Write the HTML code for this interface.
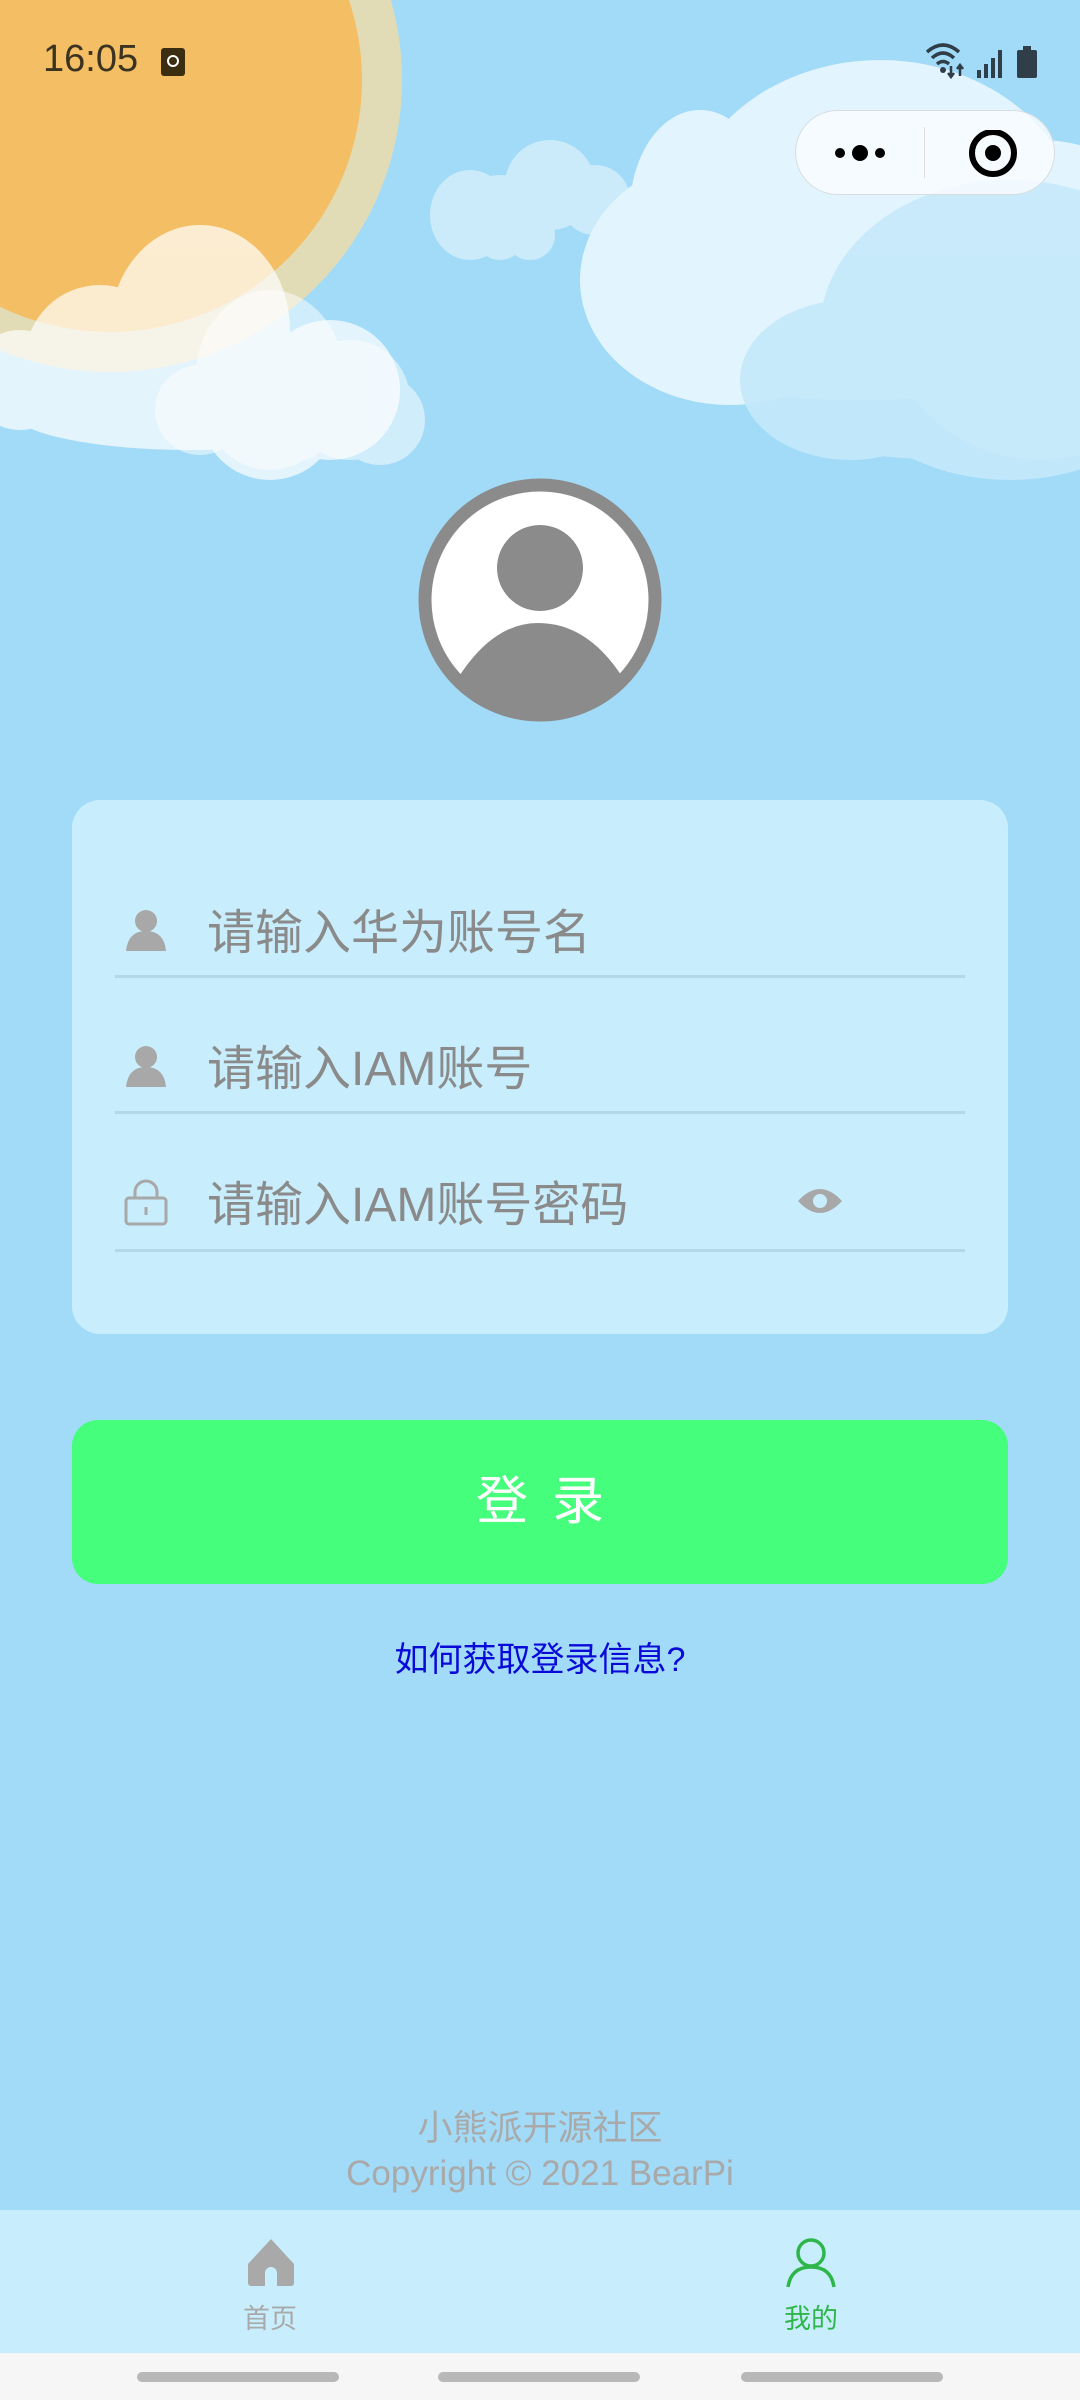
<!DOCTYPE html>
<html><head><meta charset="utf-8"><style>
*{margin:0;padding:0;box-sizing:border-box}
body{width:1080px;height:2400px;background:#a2dbf7;position:relative;overflow:hidden;font-family:"Liberation Sans","Noto Sans CJK SC",sans-serif}
.abs{position:absolute}
.card{left:72px;top:800px;width:936px;height:534px;background:#c8eefd;border-radius:28px}
.line{left:115px;width:850px;height:3px;background:#b3d9e8}
.ph{left:207px;font-size:48px;color:#8a8a8a;line-height:60px}
.btn{left:72px;top:1420px;width:936px;height:164px;background:#45fe7b;border-radius:26px;color:#fff;font-size:52px;text-align:center;line-height:164px;letter-spacing:24px;text-indent:24px}
</style></head><body>
<svg class="abs" style="left:0;top:0" width="1080" height="560">
<defs><radialGradient id="g" cx="0.55" cy="0" r="0.5"><stop offset="0" stop-color="#d0eadb"/><stop offset="1" stop-color="#a2dbf7" stop-opacity="0"/></radialGradient></defs>
<ellipse cx="420" cy="0" rx="300" ry="260" fill="url(#g)"/>
<circle cx="110" cy="80" r="292" fill="#e2dcb6"/>
<circle cx="110" cy="80" r="252" fill="#f4bf64"/>
<g fill="#fff" opacity=".7">
<ellipse cx="200" cy="330" rx="90" ry="105"/><circle cx="100" cy="360" r="75"/><circle cx="270" cy="410" r="70"/><circle cx="330" cy="390" r="70"/><circle cx="20" cy="380" r="50"/><circle cx="80" cy="400" r="40"/><ellipse cx="190" cy="410" rx="180" ry="40"/>
</g>
<g fill="#fff" opacity=".5">
<ellipse cx="270" cy="380" rx="75" ry="90"/><circle cx="350" cy="400" r="60"/><circle cx="200" cy="410" r="45"/><circle cx="380" cy="420" r="45"/><circle cx="300" cy="430" r="30"/>
</g>
<g fill="#fff" opacity=".45">
<ellipse cx="550" cy="185" rx="45" ry="45"/><circle cx="595" cy="200" r="35"/><ellipse cx="470" cy="215" rx="40" ry="45"/><ellipse cx="500" cy="205" rx="35" ry="30"/><circle cx="500" cy="235" r="25"/><circle cx="530" cy="235" r="25"/>
</g>
<g fill="#e2f4fd">
<ellipse cx="730" cy="280" rx="150" ry="125"/><ellipse cx="700" cy="210" rx="70" ry="100"/><ellipse cx="880" cy="230" rx="200" ry="170"/><circle cx="1040" cy="300" r="160"/><ellipse cx="860" cy="340" rx="240" ry="60"/>
</g>
<g fill="#c5e9fb" opacity=".9">
<ellipse cx="1010" cy="330" rx="190" ry="150"/><ellipse cx="850" cy="380" rx="110" ry="80"/><ellipse cx="960" cy="410" rx="200" ry="50"/><ellipse cx="1040" cy="420" rx="80" ry="50"/>
</g>
</svg>
<div class="abs" style="left:43px;top:38px;font-size:38px;color:#3b3322">16:05</div>
<div class="abs" style="left:161px;top:48px;width:24px;height:28px;background:#3b2d10;border-radius:3px"><div style="position:absolute;left:6px;top:7px;width:12px;height:12px;border:2px solid #fff;border-radius:50%"></div></div>
<svg class="abs" style="left:925px;top:40px" width="120" height="42">
<path d="M2 12 Q18 -2 34 12 M7 18 Q18 8 29 18 M12 24 Q18 19 24 24" stroke="#2f3e48" stroke-width="3.5" fill="none"/><circle cx="18" cy="30" r="3" fill="#2f3e48"/>
<path d="M26 26v10 M23 33l3 4 3-4 M35 36v-10 M32 29l3-4 3 4" stroke="#2f3e48" stroke-width="2.5" fill="none"/>
<rect x="52" y="30" width="4" height="8" fill="#2f3e48"/><rect x="59" y="24" width="4" height="14" fill="#2f3e48"/><rect x="66" y="18" width="4" height="20" fill="#2f3e48"/><rect x="73" y="10" width="4" height="28" fill="#2f3e48"/>
<rect x="92" y="10" width="20" height="28" rx="2" fill="#2f3e48"/><rect x="98" y="6" width="8" height="5" fill="#2f3e48"/>
</svg>
<div class="abs" style="left:795px;top:110px;width:260px;height:85px;border-radius:43px;background:rgba(248,252,255,.85);border:1.5px solid #d8dde0"></div>
<div class="abs" style="left:924px;top:127px;width:1px;height:51px;background:#dedede"></div>
<svg class="abs" style="left:830px;top:130px" width="200" height="50">
<circle cx="10" cy="23" r="5" fill="#000"/><circle cx="30" cy="23" r="8" fill="#000"/><circle cx="50" cy="23" r="5" fill="#000"/>
<circle cx="163" cy="23" r="21" stroke="#000" stroke-width="6" fill="none"/><circle cx="163" cy="23" r="8" fill="#000"/>
</svg>
<svg class="abs" style="left:418px;top:478px" width="244" height="244">
<circle cx="122" cy="122" r="115" fill="#fff" stroke="#8b8b8b" stroke-width="13"/>
<circle cx="122" cy="90" r="43" fill="#8b8b8b"/>
<clipPath id="c"><circle cx="122" cy="122" r="115"/></clipPath>
<path d="M40 200 Q75 145 120 145 Q170 145 205 200 L240 244 L0 244Z" fill="#8b8b8b" clip-path="url(#c)"/>
</svg>
<div class="abs card"></div>
<svg class="abs" style="left:124px;top:907px" width="44" height="46"><circle cx="22" cy="14" r="11" fill="#a8a8a8"/><path d="M2 44 Q4 24 22 24 Q40 24 42 44Z" fill="#a8a8a8"/></svg>
<svg class="abs" style="left:124px;top:1043px" width="44" height="46"><circle cx="22" cy="14" r="11" fill="#a8a8a8"/><path d="M2 44 Q4 24 22 24 Q40 24 42 44Z" fill="#a8a8a8"/></svg>
<svg class="abs" style="left:124px;top:1178px" width="44" height="48"><path d="M11 20V14a11 11 0 0 1 22 0v6" stroke="#a8a8a8" stroke-width="3" fill="none"/><rect x="2" y="20" width="40" height="26" rx="3" stroke="#a8a8a8" stroke-width="3" fill="none"/><rect x="20.5" y="29" width="3" height="8" fill="#a8a8a8"/></svg>
<div class="abs ph" style="top:904px">请输入华为账号名</div>
<div class="abs ph" style="top:1040px">请输入IAM账号</div>
<div class="abs ph" style="top:1176px">请输入IAM账号密码</div>
<svg class="abs" style="left:796px;top:1185px" width="48" height="32"><path d="M2 16 Q24 -8 46 16 Q24 40 2 16Z" fill="#a8a8a8"/><circle cx="24" cy="16" r="7" fill="#c8eefd"/></svg>
<div class="abs line" style="top:975px"></div>
<div class="abs line" style="top:1111px"></div>
<div class="abs line" style="top:1249px"></div>
<div class="abs btn">登录</div>
<div class="abs" style="left:0;width:1080px;top:1632px;text-align:center;font-size:34px;color:#0a0ad8">如何获取登录信息?</div>
<div class="abs" style="left:0;width:1080px;top:2106px;text-align:center;font-size:35px;color:#a9a9a9;line-height:45px">小熊派开源社区<br>Copyright © 2021 BearPi</div>
<div class="abs" style="left:0;top:2210px;width:1080px;height:143px;background:#c8eefd"></div>
<svg class="abs" style="left:244px;top:2237px" width="54" height="50"><path d="M27 2 L50 27 V46 a3 3 0 0 1 -3 3 H33 V36 a6 6 0 0 0 -12 0 V49 H7 a3 3 0 0 1 -3 -3 V27Z" fill="#a9a9a9"/></svg>
<div class="abs" style="left:230px;top:2297px;width:80px;text-align:center;font-size:27px;color:#a9a9a9">首页</div>
<svg class="abs" style="left:783px;top:2237px" width="56" height="52"><circle cx="28" cy="16" r="13" stroke="#2fb64a" stroke-width="3.5" fill="none"/><path d="M5 50 Q8 30 28 30 Q48 30 51 50" stroke="#2fb64a" stroke-width="3.5" fill="none"/></svg>
<div class="abs" style="left:771px;top:2297px;width:80px;text-align:center;font-size:27px;color:#2fb64a">我的</div>
<div class="abs" style="left:0;top:2353px;width:1080px;height:47px;background:#f6f6f6"></div>
<div class="abs" style="left:137px;top:2372px;width:202px;height:10px;border-radius:5px;background:#b8b8b8"></div>
<div class="abs" style="left:438px;top:2372px;width:202px;height:10px;border-radius:5px;background:#b8b8b8"></div>
<div class="abs" style="left:741px;top:2372px;width:202px;height:10px;border-radius:5px;background:#b8b8b8"></div>
</body></html>
